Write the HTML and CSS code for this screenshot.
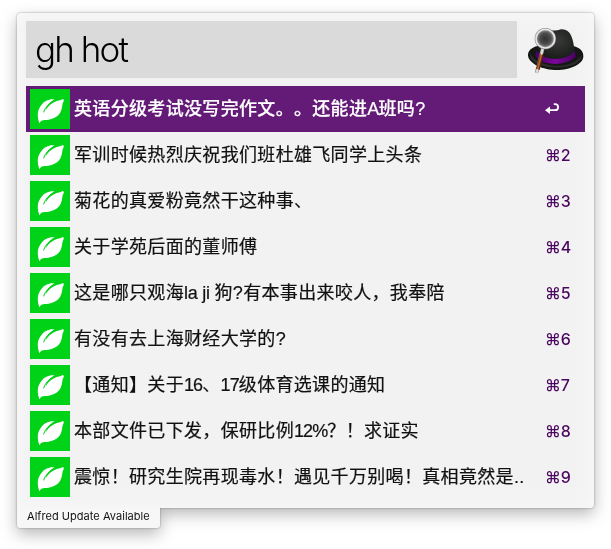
FILE: index.html
```html
<!DOCTYPE html>
<html lang="zh-CN">
<head>
<meta charset="utf-8">
<title>Alfred</title>
<link rel="stylesheet" href="styles.css">
</head>
<body>
<svg class="defs" aria-hidden="true">
  <symbol id="leaf" viewBox="0 0 120 120">
    <path fill="#fff" d="M27 99C22 82 21 66 32 51C42 35 58 29 74 31C60 39 50 49 47 64Q57 45 80 36Q91 34 99 30Q103 32 101 37C96 43 98 52 94 63C87 86 64 93 43 93Q32 94 29 101Q27 103 27 99Z"/>
    <path fill="none" stroke="#00d218" stroke-width="3" stroke-linecap="round" d="M41 69Q47 48 73 35"/>
  </symbol>
</svg>
<div class="launcher">
  <main class="window">
    <header class="top">
      <div class="search">gh hot</div>
      <svg class="hat" viewBox="48 45 180 150" aria-hidden="true">
        <defs>
          <radialGradient id="felt" cx=".55" cy=".35" r=".65"><stop offset="0" stop-color="#383a38"/><stop offset="1" stop-color="#151715"/></radialGradient>
          <radialGradient id="lens"><stop offset="0" stop-color="#303030"/><stop offset=".6" stop-color="#4c4c4c"/><stop offset="1" stop-color="#999"/></radialGradient>
          <linearGradient id="band"><stop offset="0" stop-color="#4a0066"/><stop offset=".5" stop-color="#7a0799"/><stop offset="1" stop-color="#4b0066"/></linearGradient>
        </defs>
        <path fill="#151715" d="M54 137C53 123 64 112 83 108L190 108C211 113 221 125 220 140C219 162 180 180 141 180C99 180 57 161 54 137Z"/>
        <path fill="#292c29" d="M60 130Q78 165 139 167Q197 166 215 134Q216 156 183 167Q137 181 86 164Q59 153 60 130Z"/>
        <path fill="url(#felt)" d="M81 145C84 103 95 62 123 61Q139 63 153 58C182 56 191 83 195 138Q169 158 134 157Q98 157 81 145Z"/>
        <path fill="url(#band)" d="M79 122Q100 146 134 147Q173 148 194 123L197 141Q174 162 133 162Q93 161 76 139Z"/>
        <path stroke="#777" stroke-width="11" stroke-linecap="round" d="M98 116L81 184"/>
        <path stroke="#552407" stroke-width="11" d="M96 130L84 178"/>
        <path stroke="#b66224" stroke-width="6" d="M95 130L83 178"/>
        <path stroke="#ddd" stroke-width="8" stroke-linecap="round" d="M98 116L95 130M82 181L81 185"/>
        <circle cx="106" cy="86" r="28" fill="url(#lens)" stroke="#888" stroke-width="8"/>
        <circle cx="106" cy="86" r="28" fill="none" stroke="#e5e5e5" stroke-width="5"/>
      </svg>
    </header>
    <ul class="results">
      <li class="row selected"><svg class="icon"><use href="#leaf"/></svg><span class="title">英语分级考试没写完作文。。还能进<span class="capital">A</span>班吗?</span><span class="key"><svg class="return" viewBox="0 0 14 12"><path d="M8.8 1.2H10Q13.1 1.2 13.1 4.2Q13.1 7.2 10 7.2H2"/><path class="head" d="M0 7.2L5 3.5V10.9Z"/></svg></span></li>
      <li class="row"><svg class="icon"><use href="#leaf"/></svg><span class="title">军训时候热烈庆祝我们班杜雄飞同学上头条</span><span class="key">⌘2</span></li>
      <li class="row"><svg class="icon"><use href="#leaf"/></svg><span class="title">菊花的真爱粉竟然干这种事、</span><span class="key">⌘3</span></li>
      <li class="row"><svg class="icon"><use href="#leaf"/></svg><span class="title">关于学苑后面的董师傅</span><span class="key">⌘4</span></li>
      <li class="row"><svg class="icon"><use href="#leaf"/></svg><span class="title">这是哪只观海<span class="word">la ji </span>狗?有本事出来咬人，我奉陪</span><span class="key">⌘5</span></li>
      <li class="row"><svg class="icon"><use href="#leaf"/></svg><span class="title">有没有去上海财经大学的?</span><span class="key">⌘6</span></li>
      <li class="row"><svg class="icon"><use href="#leaf"/></svg><span class="title">【通知】关于<span class="number">16</span>、<span class="number">17</span>级体育选课的通知</span><span class="key">⌘7</span></li>
      <li class="row"><svg class="icon"><use href="#leaf"/></svg><span class="title">本部文件已下发，保研比例<span class="number">12%</span>？！求证实</span><span class="key">⌘8</span></li>
      <li class="row"><svg class="icon"><use href="#leaf"/></svg><span class="title">震惊！研究生院再现毒水！遇见千万别喝！真相竟然是..</span><span class="key">⌘9</span></li>
    </ul>
  </main>
  <footer class="update">Alfred Update Available</footer>
</div>
</body>
</html>
```
FILE: styles.css
```css
* { box-sizing: border-box; }
body {
  margin: 0;
  height: 549px;
  padding: 13px 17px 0;
  overflow: hidden;
  background: #fff;
  color: #111;
  font-family: "Liberation Sans", "Noto Sans CJK SC", sans-serif;
}
.defs { position: absolute; width: 0; height: 0; }
.launcher {
  width: 577px;
  filter: drop-shadow(0 0 1px rgba(0,0,0,.34)) drop-shadow(0 6px 8px rgba(0,0,0,.28));
}
.window {
  height: 495px;
  padding: 8px 9px;
  border-radius: 4px 4px 4px 0;
  background: #f2f2f2;
  box-shadow: inset 0 0 18px 3px #f8f8f8;
}
.top { display: flex; gap: 10px; }
.search {
  flex: none;
  width: 491px;
  height: 57px;
  padding-left: 9px;
  background: #dadada;
  color: #000;
  font-family: Inter, sans-serif;
  font-size: 35px;
  font-weight: 300;
  line-height: 56px;
  letter-spacing: -1.9px;
}
.hat { flex: none; width: 60px; height: 50px; margin: 4px 0 0 -1px; }
.results { margin: 8px 0 0; padding: 0; list-style: none; }
.row {
  display: flex;
  align-items: center;
  height: 46px;
  padding: 0 4px;
}
.selected { background: #641b78; color: #fff; }
.icon { flex: none; width: 40px; height: 40px; background: #00d218; }
.title {
  flex: 1;
  margin-left: 4px;
  font-size: 18px;
  line-height: 26px;
  letter-spacing: .33px;
  text-spacing-trim: space-all;
  white-space: nowrap;
  -webkit-text-stroke: .2px currentColor;
}
.selected .title { font-weight: 500; }
.word { letter-spacing: -.25px; }
.number { letter-spacing: -.9px; }
.capital { letter-spacing: -.8px; }
.key {
  flex: none;
  width: 36px;
  color: #4b075f;
  font-family: Inter, "DejaVu Sans", sans-serif;
  font-size: 16px;
  font-weight: 500;
  line-height: 20px;
}
.return {
  display: block;
  width: 14px;
  height: 12px;
  fill: none;
  stroke: #fff;
  stroke-width: 1.8;
}
.return .head { fill: #fff; stroke: none; }
.update {
  width: 143px;
  height: 20px;
  padding-left: 10px;
  border-radius: 0 0 3px 3px;
  background: #f7f7f7;
  font-family: Inter, sans-serif;
  font-size: 11px;
  line-height: 16px;
  letter-spacing: .04px;
  white-space: nowrap;
}
```
